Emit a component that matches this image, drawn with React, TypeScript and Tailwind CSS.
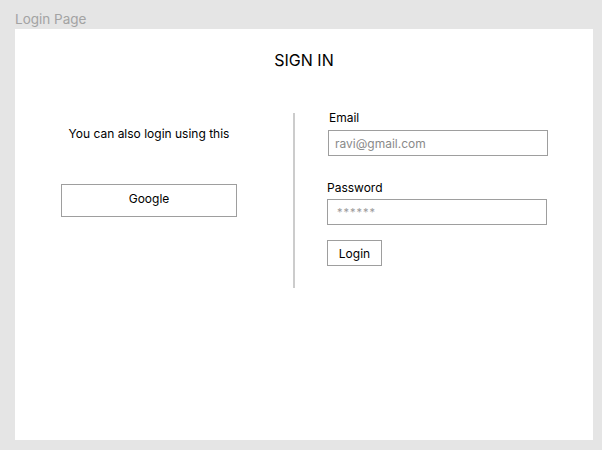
import React from "react";

export default function App() {
  return (
    <div
      className="w-[602px] h-[450px] bg-[#e5e5e5] pt-[11px] pl-[15px]"
      style={{ fontFamily: "Inter, 'Noto Sans', sans-serif" }}
    >
      <div className="text-[13.5px] leading-[16px] text-[#a3a3a3] h-[18px]">Login Page</div>
      <div className="w-[578px] h-[411px] bg-white pt-[21px]">
        <div className="text-center text-[16px] leading-[20px] text-black">SIGN IN</div>
        <div className="flex mt-[39px]">
          <div className="ml-[46px] w-[176px] flex flex-col items-center">
            <div className="mt-[17px] text-[12px] leading-[16px] text-black whitespace-nowrap">
              You can also login using this
            </div>
            <button className="mt-[42px] w-[176px] h-[33px] border border-[#9e9e9e] text-[12px] leading-[16px] pb-[3px] text-black bg-white">
              Google
            </button>
          </div>
          <div className="ml-[56px] mt-[4px] w-[2px] h-[175px] bg-[#cccccc]" />
          <div className="ml-[32px] w-[221px] flex flex-col">
            <label className="ml-[2px] pt-px h-[16px] text-[12px] leading-[16px] text-black">Email</label>
            <div className="ml-px mt-[5px] w-[220px] h-[26px] border border-[#9e9e9e] flex items-center pl-[6px] pt-px text-[12px] text-[#8a8a8a]">
              ravi@gmail.com
            </div>
            <label className="mt-[23px] pt-px h-[16px] text-[12px] leading-[16px] text-black">Password</label>
            <div className="mt-[4px] w-[220px] h-[26px] border border-[#9e9e9e] flex items-center pl-[9px] text-[11px] text-[#9a9a9a] tracking-[1px]">
              ******
            </div>
            <button className="mt-[15px] w-[55px] h-[26px] border border-[#9e9e9e] text-[12px] pt-px text-black bg-white">
              Login
            </button>
          </div>
        </div>
      </div>
    </div>
  );
}
